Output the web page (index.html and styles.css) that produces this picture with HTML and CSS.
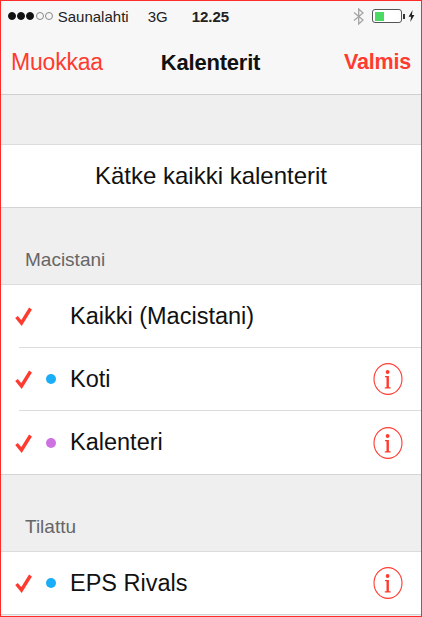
FILE: index.html
```html
<!DOCTYPE html>
<html lang="en">

<head>
    <meta charset="UTF-8">
    <meta name="viewport" content="width=device-width, initial-scale=1.0">
    <title>Kalenterit</title>
    <link rel="stylesheet" href="styles.css">
</head>

<body>
    <svg class="icon-defs" width="0" height="0">
        <symbol id="check" viewBox="0 0 18 20">
            <path d="M1.5 11 L6.5 17 L15.5 2.5" fill="none" stroke="#ff3b30" stroke-width="3.4" />
        </symbol>
        <symbol id="info" viewBox="0 0 30 32">
            <ellipse cx="15" cy="16" rx="14" ry="15.4" fill="none" stroke="#ff3b30" stroke-width="1.1" />
            <circle cx="14.6" cy="9" r="1.9" fill="#ff3b30" />
            <path d="M12 13 H15.9 V24.2 H17.6 V25.4 H11.8 V24.2 H13.5 V14.2 H12 Z" fill="#ff3b30" />
        </symbol>
    </svg>

    <div class="screen">
        <div class="topbar">
            <div class="statusbar">
                <span class="signal">
                    <i class="dot"></i><i class="dot"></i><i class="dot"></i><i class="dot off"></i><i class="dot off"></i>
                </span>
                <span class="carrier">Saunalahti</span>
                <span class="network">3G</span>
                <span class="clock">12.25</span>
                <span class="status-right">
                    <svg class="bluetooth" width="12" height="17" viewBox="0 0 12 17">
                        <path d="M1 4.5 L10 12 L5.7 16 V1 L10 5 L1 12.5" fill="none" stroke="#a5a5a5" stroke-width="1.3" />
                    </svg>
                    <span class="battery"><span class="battery-level"></span></span>
                    <span class="battery-tip"></span>
                    <svg class="bolt" width="7" height="12" viewBox="0 0 7 12">
                        <path d="M4.6 0 L0.6 6.8 H3.1 L2.3 12 L6.4 4.9 H3.9 Z" fill="#222" />
                    </svg>
                </span>
            </div>
            <div class="navbar">
                <span class="nav-left">Muokkaa</span>
                <span class="nav-title">Kalenterit</span>
                <span class="nav-right">Valmis</span>
            </div>
        </div>

        <div class="group-first">
            <div class="hide-all">Kätke kaikki kalenterit</div>
        </div>

        <h2 class="group-label">Macistani</h2>
        <div class="group">
            <div class="row">
                <svg class="check" width="18" height="20"><use href="#check" /></svg>
                <span class="cal-dot"></span>
                <span class="row-name">Kaikki (Macistani)</span>
            </div>
            <div class="row">
                <svg class="check" width="18" height="20"><use href="#check" /></svg>
                <span class="cal-dot blue"></span>
                <span class="row-name">Koti</span>
                <svg class="info" width="30" height="32"><use href="#info" /></svg>
            </div>
            <div class="row row-tall">
                <svg class="check" width="18" height="20"><use href="#check" /></svg>
                <span class="cal-dot purple"></span>
                <span class="row-name">Kalenteri</span>
                <svg class="info" width="30" height="32"><use href="#info" /></svg>
            </div>
        </div>

        <h2 class="group-label">Tilattu</h2>
        <div class="group">
            <div class="row">
                <svg class="check" width="18" height="20"><use href="#check" /></svg>
                <span class="cal-dot blue"></span>
                <span class="row-name">EPS Rivals</span>
                <svg class="info" width="30" height="32"><use href="#info" /></svg>
            </div>
        </div>
    </div>
</body>

</html>
```

FILE: styles.css
```css
html, body {
    margin: 0;
    padding: 0;
}

body {
    font-family: "Liberation Sans", Arial, sans-serif;
    background-color: #efeff0;
    color: #111;
}

.icon-defs {
    display: block;
    height: 0;
}

.screen {
    box-sizing: border-box;
    width: 422px;
    height: 617px;
    border: 1.5px solid #ff2a2a;
    overflow: hidden;
}

.topbar {
    background-color: #f7f7f7;
    border-bottom: 1px solid #cfcfcf;
    height: 93px;
}

.statusbar {
    display: flex;
    align-items: center;
    height: 30px;
    font-size: 15px;
    color: #222;
}

.signal {
    display: flex;
    gap: 1.2px;
    margin-left: 7px;
}

.dot {
    width: 8px;
    height: 8px;
    border-radius: 50%;
    background-color: #111;
    border: 1px solid #111;
    box-sizing: border-box;
}

.dot.off {
    background: none;
    border-color: #888;
}

.carrier {
    margin-left: 5px;
}

.network {
    margin-left: 19px;
}

.clock {
    margin-left: 24px;
    font-weight: bold;
}

.status-right {
    display: flex;
    align-items: center;
    margin-left: auto;
    margin-right: 6px;
}

.bluetooth {
    margin-right: 7px;
}

.battery {
    box-sizing: border-box;
    width: 30px;
    height: 14px;
    padding: 1.5px;
    border: 1px solid #555;
    border-radius: 3px;
    background-color: #fff;
}

.battery-level {
    display: block;
    width: 9px;
    height: 100%;
    background-color: #4cd964;
}

.battery-tip {
    width: 2px;
    height: 5px;
    margin-left: 1px;
    background-color: #333;
}

.bolt {
    margin-left: 3px;
}

.navbar {
    display: flex;
    justify-content: space-between;
    align-items: center;
    height: 63px;
    padding: 0 10px;
    font-size: 23px;
    color: #ff3b30;
    letter-spacing: -0.2px;
}

.nav-title {
    color: #111;
    font-size: 22px;
    font-weight: bold;
    margin-right: 26px;
}

.nav-right {
    font-size: 21.5px;
    font-weight: bold;
}

.group-first {
    margin-top: 49px;
}

.hide-all {
    height: 62px;
    line-height: 61px;
    text-align: center;
    font-size: 24px;
    background-color: #fff;
    border-top: 1px solid #dcdcdc;
    border-bottom: 1px solid #d4d4d4;
}

.group-label {
    margin: 0;
    padding: 40px 0 0 24px;
    height: 36px;
    line-height: 24px;
    font-size: 19px;
    font-weight: normal;
    color: #666;
}

.group {
    background-color: #fff;
    border-top: 1px solid #dcdcdc;
    border-bottom: 1px solid #d4d4d4;
}

.row {
    display: flex;
    align-items: center;
    height: 62px;
}

.row-tall {
    height: 63px;
}

/* separator starts after the checkmark */
.row + .row {
    border-top: 1px solid #dcdcdc;
    border-image: linear-gradient(to right, transparent 19px, #dcdcdc 19px) 1;
}

.check {
    margin-left: 14px;
    flex-shrink: 0;
}

.cal-dot {
    width: 10px;
    height: 10px;
    margin-left: 13px;
    border-radius: 50%;
    flex-shrink: 0;
}

.cal-dot.blue {
    background-color: #1badf8;
}

.cal-dot.purple {
    background-color: #cc73e1;
}

.row-name {
    margin-left: 14px;
    font-size: 23.5px;
}

.info {
    margin-left: auto;
    margin-right: 18px;
}
```
